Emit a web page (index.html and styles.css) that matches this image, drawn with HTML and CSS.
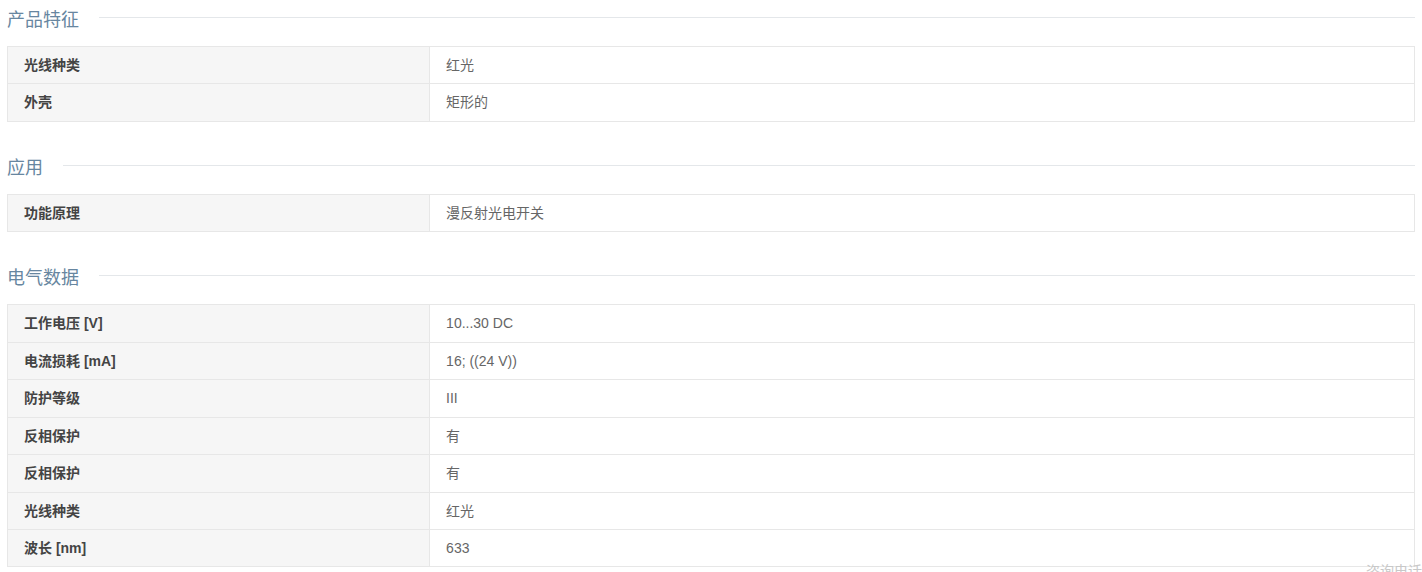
FILE: index.html
```html
<!DOCTYPE html>
<html lang="zh-CN">
<head>
<meta charset="utf-8">
<title>产品参数</title>
<link rel="stylesheet" href="styles.css">
</head>
<body>
<div class="page">
  <div class="sec-title"><span class="sec-text">产品特征</span><span class="sec-line"></span></div>
  <table class="spec">
    <tr><td class="k">光线种类</td><td class="v">红光</td></tr>
    <tr><td class="k">外壳</td><td class="v">矩形的</td></tr>
  </table>

  <div class="sec-title"><span class="sec-text">应用</span><span class="sec-line"></span></div>
  <table class="spec">
    <tr><td class="k">功能原理</td><td class="v">漫反射光电开关</td></tr>
  </table>

  <div class="sec-title"><span class="sec-text">电气数据</span><span class="sec-line"></span></div>
  <table class="spec">
    <tr><td class="k">工作电压 [V]</td><td class="v">10...30 DC</td></tr>
    <tr><td class="k">电流损耗 [mA]</td><td class="v">16; ((24 V))</td></tr>
    <tr><td class="k">防护等级</td><td class="v">III</td></tr>
    <tr><td class="k">反相保护</td><td class="v">有</td></tr>
    <tr><td class="k">反相保护</td><td class="v">有</td></tr>
    <tr><td class="k">光线种类</td><td class="v">红光</td></tr>
    <tr><td class="k">波长 [nm]</td><td class="v">633</td></tr>
  </table>
</div>
<div class="float-tip">咨询电话 V</div>
</body>
</html>
```

FILE: styles.css
```css
html, body {
  margin: 0;
  padding: 0;
  overflow: hidden;
  background: #fff;
}
body {
  font-family: "Liberation Sans", Arial, "Noto Sans CJK SC", sans-serif;
  font-size: 14px;
  color: #666;
}
.page {
  padding: 0 7px;
}
.sec-title {
  display: flex;
  align-items: center;
  height: 36px;
  margin-bottom: 10px;
}
.sec-text {
  font-size: 18px;
  color: #6786a0;
  white-space: nowrap;
}
.sec-line {
  flex: 1;
  height: 1px;
  background: #e4e7ea;
  margin-left: 20px;
  margin-top: -1px;
}
.spec {
  width: 100%;
  border-collapse: collapse;
  margin-bottom: 26px;
}
.spec td {
  border: 1px solid #e7e7e7;
  padding: 8px 16px;
  line-height: 20.43px;
  vertical-align: middle;
}
.spec .k {
  width: 30%;
  background: #f6f6f6;
  font-weight: bold;
  color: #444;
  padding-left: 16px;
}
.spec .v {
  color: #666;
}
.float-tip {
  position: absolute;
  left: 1366px;
  top: 560px;
  font-size: 14px;
  color: #c8c8c8;
  white-space: nowrap;
}
```
